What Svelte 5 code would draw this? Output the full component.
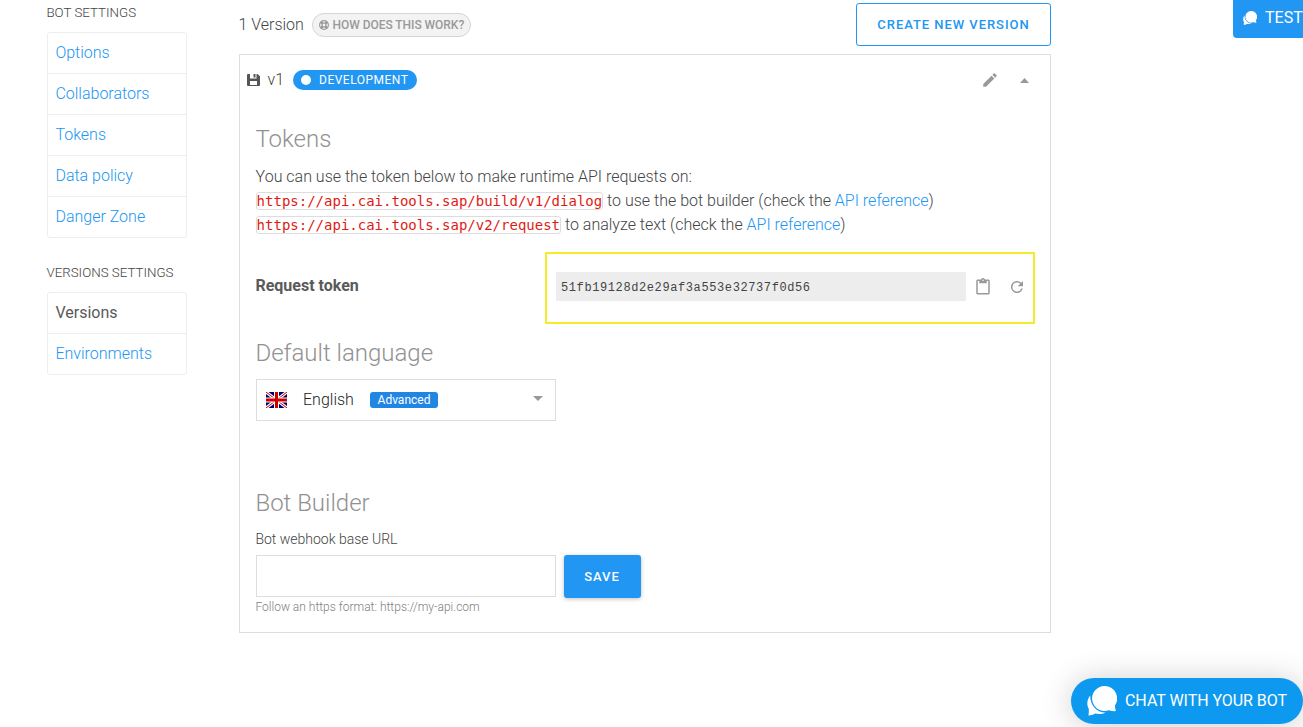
<script>
  const botSettings = ['Options', 'Collaborators', 'Tokens', 'Data policy', 'Danger Zone'];
  const versionSettings = ['Versions', 'Environments'];
  let webhook = $state('');
</script>

{#snippet bubbles(size)}
  <svg width={size} height={size} viewBox="0 0 30 30" fill="currentColor" aria-hidden="true">
    <path d="M17.5 0A12.5 12.5 0 1 0 22 24.2C24.4 25.1 26.8 25.3 29 25.1 28.2 23.4 27.9 21.5 28 19.4A12.5 12.5 0 0 0 17.5 0Z" />
    <path d="M3.2 9.5C.3 13 -.7 18.5 1.6 22.3 2.1 25 1.9 27.5 1.3 29.6 4 29.5 6 28.9 8.3 27.6 12 28.5 15.5 28.2 18.5 26.5 10 26.8 3.1 19.5 3.2 9.5Z" />
  </svg>
{/snippet}

<div class="page">
  <aside>
    <h4>BOT SETTINGS</h4>
    <nav>
      {#each botSettings as item}<a href="#top">{item}</a>{/each}
    </nav>
    <h4 class="second">VERSIONS SETTINGS</h4>
    <nav>
      {#each versionSettings as item, i}<a href="#top" class:current={i === 0}>{item}</a>{/each}
    </nav>
  </aside>

  <main>
    <header>
      <span class="count">1 Version</span>
      <span class="help">
        <svg width="10" height="10" viewBox="0 0 20 20" fill="none" stroke="currentColor" aria-hidden="true">
          <circle cx="10" cy="10" r="8.8" stroke-width="2.2" />
          <circle cx="10" cy="10" r="3.9" stroke-width="2" />
          <path d="M3.5 3.5l4 4M16.5 3.5l-4 4M3.5 16.5l4-4M16.5 16.5l-4-4" stroke-width="5" />
        </svg>
        HOW DOES THIS WORK?
      </span>
      <button class="create">CREATE NEW VERSION</button>
    </header>

    <section class="card">
      <div class="bar">
        <svg class="floppy" width="13" height="12" viewBox="0 0 13 12" aria-hidden="true">
          <path fill="#555" fill-rule="evenodd" d="M1 0H3V4.5H9.5V0H10.5L13 2.3V11Q13 12 12 12H1Q0 12 0 11V1Q0 0 1 0ZM3 7V11H10V7ZM6.5 0H8.5V3.5H6.5Z" />
        </svg>
        <span class="name">v1</span>
        <span class="env"><i></i>DEVELOPMENT</span>
        <svg class="pencil" width="18" height="18" viewBox="0 0 24 24" fill="#999" aria-hidden="true">
          <path d="M3 17.25V21h3.75L17.81 9.94l-3.75-3.75L3 17.25zM20.71 7.04a1 1 0 0 0 0-1.41l-2.34-2.34a1 1 0 0 0-1.41 0l-1.83 1.83 3.75 3.75 1.83-1.83z" />
        </svg>
        <svg width="9" height="5" viewBox="0 0 9 5" fill="#999" aria-hidden="true"><path d="M0 5L4.5 0 9 5z" /></svg>
      </div>

      <h2 class="tokens">Tokens</h2>
      <p class="intro">
        You can use the token below to make runtime API requests on:<br />
        <code>https://api.cai.tools.sap/build/v1/dialog</code> to use the bot builder (check the <a href="#top">API reference</a>)<br />
        <code>https://api.cai.tools.sap/v2/request</code> to analyze text (check the <a href="#top">API reference</a>)
      </p>

      <div class="request">
        <strong>Request token</strong>
        <div class="frame">
          <span class="value">51fb19128d2e29af3a553e32737f0d56</span>
          <svg class="clip" width="18" height="18" viewBox="0 0 24 24" fill="#999" aria-hidden="true">
            <path d="M19 2h-4.18C14.4.84 13.3 0 12 0S9.6.84 9.18 2H5c-1.1 0-2 .9-2 2v16c0 1.1.9 2 2 2h14c1.1 0 2-.9 2-2V4c0-1.1-.9-2-2-2zm-7 0a1 1 0 1 1 0 2 1 1 0 0 1 0-2zm7 18H5V4h2v3h10V4h2v16z" />
          </svg>
          <svg width="18" height="18" viewBox="0 0 24 24" fill="#999" aria-hidden="true">
            <path d="M17.65 6.35A8 8 0 1 0 19.73 14h-2.08A6 6 0 1 1 12 6c1.66 0 3.14.69 4.22 1.78L13 11h7V4l-2.35 2.35z" />
          </svg>
        </div>
      </div>

      <h2 class="language">Default language</h2>
      <div class="select">
        <svg width="21" height="16" viewBox="0 0 21 16" aria-hidden="true">
          <path fill="#006" d="M0 0h21v16H0z" />
          <path stroke="#fff" stroke-width="3" d="M0 0l21 16M21 0L0 16" />
          <path stroke="#c00" stroke-width="1" d="M0 0l21 16M21 0L0 16" />
          <path stroke="#fff" stroke-width="5" d="M10.5 0v16M0 8h21" />
          <path stroke="#c00" stroke-width="3" d="M10.5 0v16M0 8h21" />
        </svg>
        <span class="lang">English</span>
        <span class="badge">Advanced</span>
        <svg class="caret" width="10" height="5" viewBox="0 0 10 5" fill="#999" aria-hidden="true"><path d="M0 0h10L5 5z" /></svg>
      </div>

      <h2 class="builder">Bot Builder</h2>
      <label for="webhook">Bot webhook base URL</label>
      <div class="form">
        <input id="webhook" bind:value={webhook} />
        <button class="save">SAVE</button>
      </div>
      <div class="hint">Follow an https format: https://my-api.com</div>
    </section>
  </main>

  <button class="test">{@render bubbles(14)}<span>TEST</span></button>
  <button class="chat">{@render bubbles(30)}<span>CHAT WITH YOUR BOT</span></button>
</div>

<style>
  :global(body) { background: #fff; overflow: hidden; }
  .page {
    position: relative; box-sizing: border-box; width: 1303px; height: 727px; overflow: hidden;
    padding-left: 47px; display: flex; gap: 52px;
    font: 300 16px/24px Roboto, sans-serif; color: #444;
  }
  a { color: #2196f3; text-decoration: none; }
  button { font-family: Roboto, sans-serif; border: 0; margin: 0; }
  svg { flex: none; display: block; }

  aside { width: 140px; }
  h4 { margin: 0 0 4px; padding-top: 4px; font-weight: 300; font-size: 13.33px; line-height: 17px; height: 28px; box-sizing: border-box; text-indent: -.6px; white-space: nowrap; }
  h4.second { margin-top: 22px; }
  nav { border: 1px solid #eee; border-radius: 3px; }
  nav a { display: block; height: 40px; line-height: 39px; padding-left: 7.4px; }
  nav a + a { border-top: 1px solid #eee; }
  nav a.current { color: #5a5a5a; font-weight: 400; }

  main { width: 812px; }
  header { display: flex; align-items: center; height: 54px; box-sizing: border-box; padding-bottom: 5px; }
  .count { width: 73px; white-space: nowrap; text-indent: -.6px; }
  .help {
    display: flex; align-items: center; gap: 3.5px; box-sizing: border-box; width: 159px; height: 24px; padding-left: 6px;
    border: 1px solid #d5d5d5; border-radius: 12px; background: #f3f3f3; color: #999;
    font-weight: 500; font-size: 12px; letter-spacing: -.04px; white-space: nowrap;
  }
  .create {
    margin-left: auto; width: 195px; height: 43px; padding: 0; border: 1px solid #2196f3; border-radius: 3px;
    background: #fff; color: #2196f3; font-size: 13px; font-weight: 500; letter-spacing: .95px;
  }

  .card { box-sizing: border-box; height: 579px; border: 1px solid #ddd; padding: 0 15px 0 16px; }
  .bar { display: flex; align-items: center; height: 50px; margin-left: -9px; padding-right: 6px; }
  .floppy { margin-top: -1px; }
  .name { margin-left: 7.5px; width: 25.5px; }
  .env { display: flex; align-items: center; box-sizing: border-box; width: 124px; height: 20px; padding-left: 8px; border-radius: 10px; background: #2196f3; color: #fff; font-size: 12px; font-weight: 400; letter-spacing: .5px; }
  .env i { width: 10px; height: 10px; margin-right: 8px; border-radius: 50%; background: #fff; }
  .pencil { margin: 0 21px 0 auto; }

  h2 { margin: 0; font-size: 24px; line-height: 30px; font-weight: 300; color: #919191; text-indent: -.6px; }
  .tokens { margin-top: 19px; }
  .intro { margin: 11px 0 0 -.4px; white-space: nowrap; }
  code { font: 400 14px/16px "DejaVu Sans Mono", monospace; color: #e11b14; border: 1px solid #ddd; border-radius: 3px; }
  .request { display: flex; height: 72px; margin-top: 15px; justify-content: space-between; }
  strong { font-weight: 700; font-size: 16px; color: #5a5a5a; margin: 22px 0 0 -.6px; }
  .frame { box-sizing: border-box; width: 490px; height: 72px; border: 2px solid #f5ec27; padding: 0 9px 3px; display: flex; align-items: center; }
  .value { flex: none; width: 410px; height: 29px; box-sizing: border-box; padding-left: 5px; background: #ededed; font: 400 12px/32px "Liberation Mono", monospace; letter-spacing: .6px; color: #444; }
  .clip { margin: 0 16px 0 7.5px; }

  .language { margin-top: 14px; }
  .select { box-sizing: border-box; width: 300px; height: 42px; margin-top: 11px; border: 1px solid #ddd; display: flex; align-items: center; padding: 0 12px 0 9px; }
  .lang { margin-left: 16px; width: 67px; color: #222; }
  .badge { width: 68px; height: 16px; border-radius: 3px; background: #2185e3; color: #fff; font-size: 12px; line-height: 17px; font-weight: 400; text-align: center; }
  .caret { margin: -3px 0 0 auto; }

  .builder { margin-top: 67px; }
  label { display: block; margin-top: 11px; font-size: 14px; line-height: 20px; text-indent: -.6px; }
  .form { display: flex; gap: 8px; height: 43px; margin-top: 6px; }
  input { box-sizing: border-box; width: 300px; height: 42px; border: 1px solid #ddd; padding: 0 8px; font: inherit; }
  .save { width: 77px; height: 43px; padding: 0 1px 0 0; border-radius: 3px; background: #2196f3; color: #fff; font-size: 13px; font-weight: 500; letter-spacing: 1px; box-shadow: 0 1px 4px rgba(0, 0, 0, .25); }
  .hint { font-size: 12px; line-height: 18px; color: #808080; text-indent: -.6px; }

  .test { position: absolute; left: 1233px; top: -5px; width: 90px; height: 43px; border-radius: 4px; background: #2196f3; color: #fff; display: flex; align-items: center; gap: 8px; padding: 2px 0 0 10px; font-size: 16px; font-weight: 400; }
  .chat { position: absolute; left: 1071px; top: 678px; width: 232px; height: 46px; border-radius: 23px; background: #0d99ef; color: #fff; display: flex; align-items: center; gap: 8px; padding: 0 0 1px 16px; font-size: 16px; font-weight: 400; letter-spacing: -.04px; white-space: nowrap; box-shadow: 0 2px 32px rgba(0, 0, 0, .2); }
</style>
